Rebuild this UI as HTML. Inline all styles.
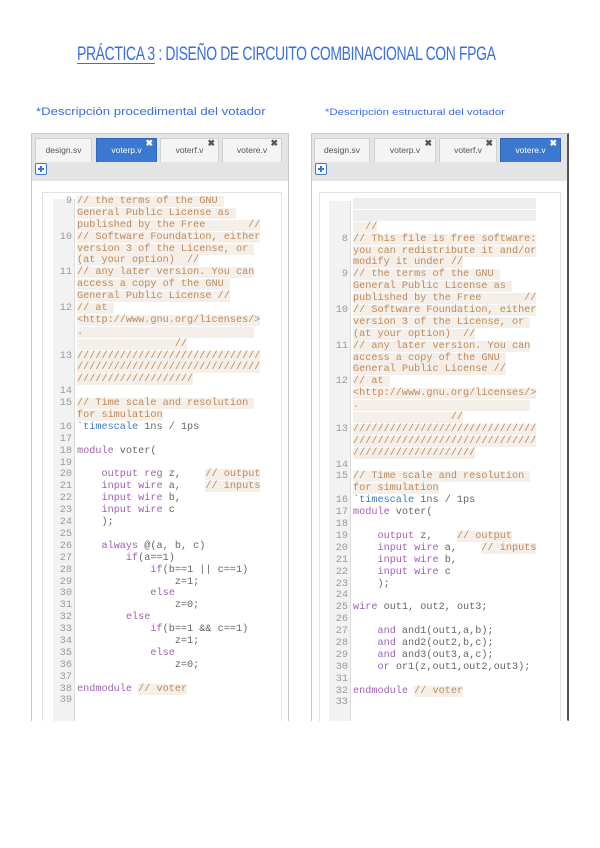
<!DOCTYPE html>
<html><head><meta charset="utf-8"><style>
*{margin:0;padding:0;box-sizing:border-box}
body{width:600px;height:848px;background:#fff;position:relative;overflow:hidden;font-family:"Liberation Sans",sans-serif}
.hw{position:absolute;color:#3a6ee6;white-space:nowrap;transform-origin:left top}
.panel{position:absolute;top:133px;width:258px;height:588px;background:#e4e4e4;border:1px solid #c8c8c8}
.tab{position:absolute;top:4px;height:24px;background:#f4f4f4;border:1px solid #d0d0d0;border-bottom:none;font-size:8.5px;color:#555;text-align:center;line-height:22px}
.tab.a{background:#3b78cf;color:#fff;border-color:#2f66b8}
.x{position:absolute;right:3px;top:-7px;font-size:9px;font-weight:bold;color:#555}
.tab.a .x{color:#fff}
.plus{position:absolute;left:3px;top:29px;width:12px;height:12px;border:1.3px solid #3b78cf;border-radius:2px;background:#fff}
.plus:before{content:"";position:absolute;left:1.5px;top:4.4px;width:6.5px;height:1.3px;background:#3b78cf}
.plus:after{content:"";position:absolute;left:4.4px;top:1.5px;width:1.3px;height:6.5px;background:#3b78cf}
.code{position:absolute;left:0;top:47px;width:100%;height:540px;background:#fff}
.box{position:absolute;left:10px;top:11px;right:6px;bottom:0;border:1px solid #e2e2e2;border-bottom:none}
.gut{position:absolute;left:10px;top:6px;width:22px;bottom:0;background:#f2f2f2;border-right:1px solid #ddd}
.lines{position:absolute;left:10px;top:3px;right:0;font-family:"Liberation Mono",monospace;font-size:10.2px;line-height:11.9px;color:#666;white-space:normal}
.r{height:11.9px;position:relative}
.r b{position:absolute;left:0;width:19px;text-align:right;font-weight:normal;color:#9a9a9a}
.r i{position:absolute;left:24px;font-style:normal;white-space:pre}
.c{color:#c0895a;background:#f4efe9}
.k{color:#a35fb5}
.t{color:#3d7cc9}
</style></head><body>
<div class="hw" style="left:77px;top:44px;font-size:19px;letter-spacing:-0.5px;transform:scaleX(0.735)"><span style="text-decoration:underline;text-underline-offset:3px">PRÁCTICA 3</span> : DISEÑO DE CIRCUITO COMBINACIONAL CON FPGA</div>
<div class="hw" style="left:36px;top:106px;font-size:11px;transform:scaleX(1.2)">*Descripción procedimental del votador</div>
<div class="hw" style="left:325px;top:107px;font-size:9.5px;transform:scaleX(1.2)">*Descripción estructural del votador</div>

<div class="panel" style="left:31px">
 <div class="tab" style="left:3px;width:57px">design.sv</div>
 <div class="tab a" style="left:64px;width:61px">voterp.v<span class="x">✖</span></div>
 <div class="tab" style="left:128px;width:59px">voterf.v<span class="x">✖</span></div>
 <div class="tab" style="left:190px;width:60px">votere.v<span class="x">✖</span></div>
 <div class="plus"></div>
 <div class="code"><div class="box"><div class="gut"></div><div class="lines"><div class="r"><b>9</b><i><span class="c">// the terms of the GNU </span></i></div><div class="r"><b></b><i><span class="c">General Public License as </span></i></div><div class="r"><b></b><i><span class="c">published by the Free       //</span></i></div><div class="r"><b>10</b><i><span class="c">// Software Foundation, either</span></i></div><div class="r"><b></b><i><span class="c">version 3 of the License, or </span></i></div><div class="r"><b></b><i><span class="c">(at your option)  //</span></i></div><div class="r"><b>11</b><i><span class="c">// any later version. You can</span></i></div><div class="r"><b></b><i><span class="c">access a copy of the GNU </span></i></div><div class="r"><b></b><i><span class="c">General Public License //</span></i></div><div class="r"><b>12</b><i><span class="c">// at </span></i></div><div class="r"><b></b><i><span class="c">&lt;http://www.gnu.org/licenses/&gt;</span></i></div><div class="r"><b></b><i><span class="c">.                            </span></i></div><div class="r"><b></b><i><span class="c">                //</span></i></div><div class="r"><b>13</b><i><span class="c">//////////////////////////////</span></i></div><div class="r"><b></b><i><span class="c">//////////////////////////////</span></i></div><div class="r"><b></b><i><span class="c">///////////////////</span></i></div><div class="r"><b>14</b><i></i></div><div class="r"><b>15</b><i><span class="c">// Time scale and resolution </span></i></div><div class="r"><b></b><i><span class="c">for simulation</span></i></div><div class="r"><b>16</b><i><span class="t">`timescale</span> 1ns / 1ps</i></div><div class="r"><b>17</b><i></i></div><div class="r"><b>18</b><i><span class="k">module</span> voter(</i></div><div class="r"><b>19</b><i></i></div><div class="r"><b>20</b><i>    <span class="k">output reg</span> z,    <span class="c">// output</span></i></div><div class="r"><b>21</b><i>    <span class="k">input wire</span> a,    <span class="c">// inputs</span></i></div><div class="r"><b>22</b><i>    <span class="k">input wire</span> b,</i></div><div class="r"><b>23</b><i>    <span class="k">input wire</span> c</i></div><div class="r"><b>24</b><i>    );</i></div><div class="r"><b>25</b><i></i></div><div class="r"><b>26</b><i>    <span class="k">always</span> @(a, b, c)</i></div><div class="r"><b>27</b><i>        <span class="k">if</span>(a==1)</i></div><div class="r"><b>28</b><i>            <span class="k">if</span>(b==1 || c==1)</i></div><div class="r"><b>29</b><i>                z=1;</i></div><div class="r"><b>30</b><i>            <span class="k">else</span></i></div><div class="r"><b>31</b><i>                z=0;</i></div><div class="r"><b>32</b><i>        <span class="k">else</span></i></div><div class="r"><b>33</b><i>            <span class="k">if</span>(b==1 &amp;&amp; c==1)</i></div><div class="r"><b>34</b><i>                z=1;</i></div><div class="r"><b>35</b><i>            <span class="k">else</span></i></div><div class="r"><b>36</b><i>                z=0;</i></div><div class="r"><b>37</b><i></i></div><div class="r"><b>38</b><i><span class="k">endmodule</span> <span class="c">// voter</span></i></div><div class="r"><b>39</b><i></i></div></div></div></div>
</div>

<div class="panel" style="left:311px;border-right:2px solid #555">
 <div class="tab" style="left:2px;width:56px">design.sv</div>
 <div class="tab" style="left:62px;width:62px">voterp.v<span class="x">✖</span></div>
 <div class="tab" style="left:127px;width:58px">voterf.v<span class="x">✖</span></div>
 <div class="tab a" style="left:188px;width:61px">votere.v<span class="x">✖</span></div>
 <div class="plus"></div>
 <div class="code"><div class="box" style="left:7px"><div class="gut" style="left:9px;top:8px"></div><div class="lines" style="left:9px;top:5px"><div class="r"><b></b><i><span class="c" style="background:#eeeeee">                              </span></i></div><div class="r"><b></b><i><span class="c" style="background:#eeeeee">                              </span></i></div><div class="r"><b></b><i><span class="c">  //</span></i></div><div class="r"><b>8</b><i><span class="c">// This file is free software:</span></i></div><div class="r"><b></b><i><span class="c">you can redistribute it and/or</span></i></div><div class="r"><b></b><i><span class="c">modify it under //</span></i></div><div class="r"><b>9</b><i><span class="c">// the terms of the GNU </span></i></div><div class="r"><b></b><i><span class="c">General Public License as </span></i></div><div class="r"><b></b><i><span class="c">published by the Free       //</span></i></div><div class="r"><b>10</b><i><span class="c">// Software Foundation, either</span></i></div><div class="r"><b></b><i><span class="c">version 3 of the License, or </span></i></div><div class="r"><b></b><i><span class="c">(at your option)  //</span></i></div><div class="r"><b>11</b><i><span class="c">// any later version. You can</span></i></div><div class="r"><b></b><i><span class="c">access a copy of the GNU </span></i></div><div class="r"><b></b><i><span class="c">General Public License //</span></i></div><div class="r"><b>12</b><i><span class="c">// at </span></i></div><div class="r"><b></b><i><span class="c">&lt;http://www.gnu.org/licenses/&gt;</span></i></div><div class="r"><b></b><i><span class="c">.                            </span></i></div><div class="r"><b></b><i><span class="c">                //</span></i></div><div class="r"><b>13</b><i><span class="c">//////////////////////////////</span></i></div><div class="r"><b></b><i><span class="c">//////////////////////////////</span></i></div><div class="r"><b></b><i><span class="c">////////////////////</span></i></div><div class="r"><b>14</b><i></i></div><div class="r"><b>15</b><i><span class="c">// Time scale and resolution </span></i></div><div class="r"><b></b><i><span class="c">for simulation</span></i></div><div class="r"><b>16</b><i><span class="t">`timescale</span> 1ns / 1ps</i></div><div class="r"><b>17</b><i><span class="k">module</span> voter(</i></div><div class="r"><b>18</b><i></i></div><div class="r"><b>19</b><i>    <span class="k">output</span> z,    <span class="c">// output</span></i></div><div class="r"><b>20</b><i>    <span class="k">input wire</span> a,    <span class="c">// inputs</span></i></div><div class="r"><b>21</b><i>    <span class="k">input wire</span> b,</i></div><div class="r"><b>22</b><i>    <span class="k">input wire</span> c</i></div><div class="r"><b>23</b><i>    );</i></div><div class="r"><b>24</b><i></i></div><div class="r"><b>25</b><i><span class="k">wire</span> out1, out2, out3;</i></div><div class="r"><b>26</b><i></i></div><div class="r"><b>27</b><i>    <span class="k">and</span> and1(out1,a,b);</i></div><div class="r"><b>28</b><i>    <span class="k">and</span> and2(out2,b,c);</i></div><div class="r"><b>29</b><i>    <span class="k">and</span> and3(out3,a,c);</i></div><div class="r"><b>30</b><i>    <span class="k">or</span> or1(z,out1,out2,out3);</i></div><div class="r"><b>31</b><i></i></div><div class="r"><b>32</b><i><span class="k">endmodule</span> <span class="c">// voter</span></i></div><div class="r"><b>33</b><i></i></div></div></div></div>
</div>
</body></html>
